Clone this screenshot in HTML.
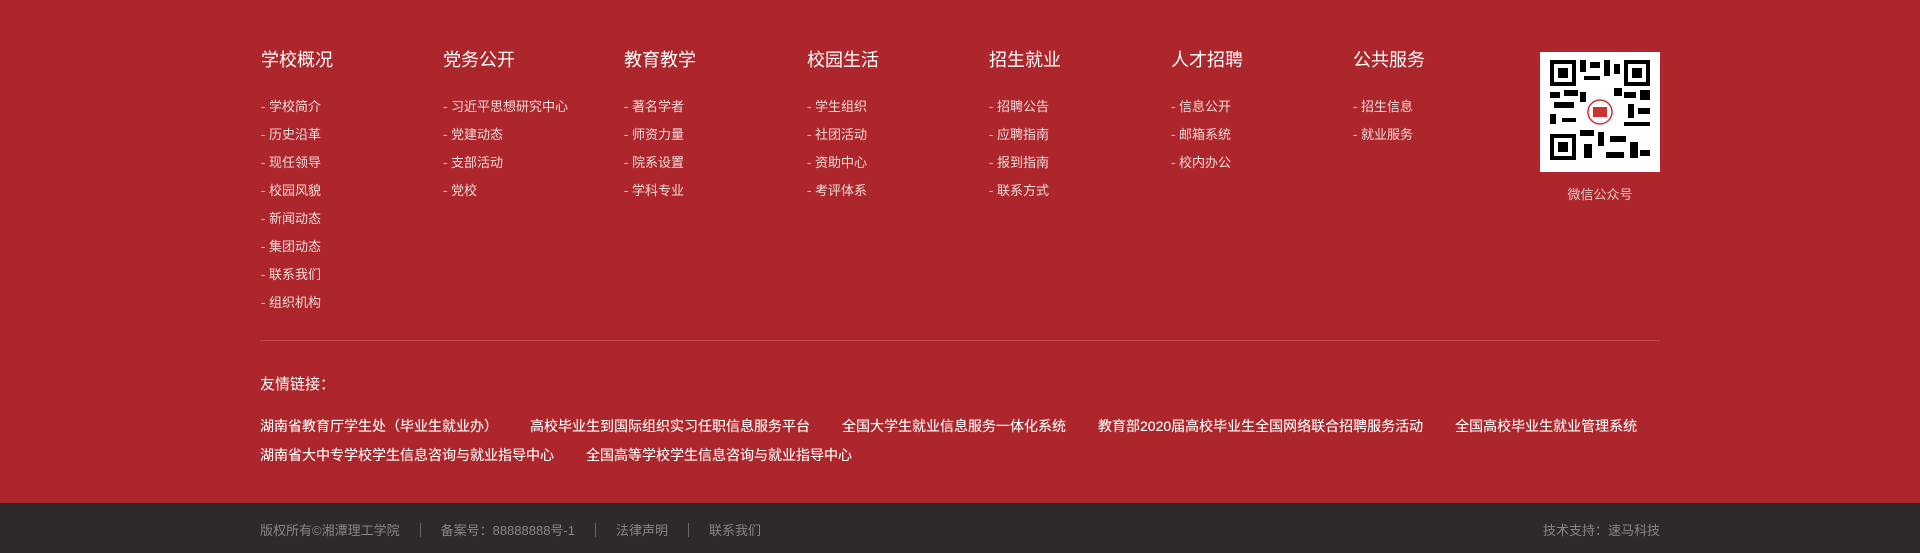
<!DOCTYPE html>
<html><head><meta charset="utf-8"><style>
*{margin:0;padding:0;box-sizing:border-box}
body{width:1920px;height:553px;background:#ad262b;font-family:"Liberation Sans","Noto Sans CJK SC",sans-serif;position:relative;overflow:hidden}
.col{position:absolute;top:48px;color:#fff}
.col h3{font-size:18px;font-weight:normal;line-height:24px;margin-bottom:21px}
.col p{font-size:13px;color:#f0dcdc;line-height:28px;height:28px}
.qr{position:absolute;left:1540px;top:52px;width:120px;height:120px;background:#fff}
.cap{position:absolute;left:1540px;width:120px;top:184px;text-align:center;color:#e8c8c8;font-size:13px}
.line{position:absolute;left:260px;width:1400px;top:340px;height:1px;background:#bf4a4e}
.fh{position:absolute;left:260px;top:373px;color:#fff;font-size:15px}
.fl{position:absolute;left:260px;color:#fff;font-size:14px;white-space:nowrap;-webkit-text-stroke:0.1px #fff}
.fl span{margin-right:32px}
.bar{position:absolute;left:0;top:503px;width:1920px;height:50px;background:#2e2a2a;color:#8a8585;font-size:13px}
.bar .l{position:absolute;left:260px;top:17px}
.bar .l i{display:inline-block;width:1px;height:14px;background:#666;margin:0 20px;vertical-align:-2px}
.bar .r{position:absolute;right:260px;top:17px}
</style></head><body>
<div class="col" style="left:261px"><h3>学校概况</h3><p>- 学校简介</p><p>- 历史沿革</p><p>- 现任领导</p><p>- 校园风貌</p><p>- 新闻动态</p><p>- 集团动态</p><p>- 联系我们</p><p>- 组织机构</p></div>
<div class="col" style="left:443px"><h3>党务公开</h3><p>- 习近平思想研究中心</p><p>- 党建动态</p><p>- 支部活动</p><p>- 党校</p></div>
<div class="col" style="left:624px"><h3>教育教学</h3><p>- 著名学者</p><p>- 师资力量</p><p>- 院系设置</p><p>- 学科专业</p></div>
<div class="col" style="left:807px"><h3>校园生活</h3><p>- 学生组织</p><p>- 社团活动</p><p>- 资助中心</p><p>- 考评体系</p></div>
<div class="col" style="left:989px"><h3>招生就业</h3><p>- 招聘公告</p><p>- 应聘指南</p><p>- 报到指南</p><p>- 联系方式</p></div>
<div class="col" style="left:1171px"><h3>人才招聘</h3><p>- 信息公开</p><p>- 邮箱系统</p><p>- 校内办公</p></div>
<div class="col" style="left:1353px"><h3>公共服务</h3><p>- 招生信息</p><p>- 就业服务</p></div>
<div class="qr"><svg width="120" height="120" viewBox="0 0 120 120">
<g fill="#000">
<rect x="10" y="8" width="26" height="26"/><rect x="84" y="8" width="26" height="26"/><rect x="10" y="82" width="26" height="26"/>
</g><g fill="#fff"><rect x="14" y="12" width="18" height="18"/><rect x="88" y="12" width="18" height="18"/><rect x="14" y="86" width="18" height="18"/></g>
<g fill="#000"><rect x="18" y="16" width="10" height="10"/><rect x="92" y="16" width="10" height="10"/><rect x="18" y="90" width="10" height="10"/>
<rect x="40" y="8" width="6" height="12"/><rect x="50" y="10" width="10" height="6"/><rect x="64" y="8" width="6" height="16"/><rect x="74" y="12" width="6" height="10"/><rect x="44" y="24" width="16" height="4"/>
<rect x="10" y="40" width="10" height="6"/><rect x="24" y="38" width="14" height="6"/><rect x="14" y="50" width="20" height="6"/><rect x="10" y="62" width="6" height="10"/><rect x="22" y="66" width="14" height="4"/>
<rect x="84" y="40" width="12" height="6"/><rect x="100" y="38" width="10" height="10"/><rect x="88" y="52" width="6" height="14"/><rect x="98" y="56" width="12" height="6"/><rect x="84" y="70" width="26" height="4"/>
<rect x="40" y="78" width="14" height="6"/><rect x="58" y="80" width="6" height="14"/><rect x="70" y="84" width="16" height="6"/><rect x="44" y="92" width="8" height="14"/><rect x="90" y="90" width="8" height="16"/><rect x="100" y="98" width="10" height="6"/><rect x="66" y="100" width="18" height="6"/><rect x="40" y="40" width="6" height="10"/><rect x="74" y="36" width="8" height="8"/></g>
<circle cx="60" cy="60" r="14" fill="#fff"/><circle cx="60" cy="60" r="12" fill="#fff" stroke="#c33" stroke-width="1.5"/><rect x="53" y="55" width="14" height="10" fill="#c33"/>
</svg></div>
<div class="cap">微信公众号</div>
<div class="line"></div>
<div class="fh">友情链接：</div>
<div class="fl" style="top:416px"><span>湖南省教育厅学生处（毕业生就业办）</span><span>高校毕业生到国际组织实习任职信息服务平台</span><span>全国大学生就业信息服务一体化系统</span><span>教育部2020届高校毕业生全国网络联合招聘服务活动</span><span>全国高校毕业生就业管理系统</span></div>
<div class="fl" style="top:445px"><span>湖南省大中专学校学生信息咨询与就业指导中心</span><span>全国高等学校学生信息咨询与就业指导中心</span></div>
<div class="bar"><div class="l">版权所有©湘潭理工学院<i></i>备案号：88888888号-1<i></i>法律声明<i></i>联系我们</div><div class="r">技术支持：速马科技</div></div>
</body></html>
